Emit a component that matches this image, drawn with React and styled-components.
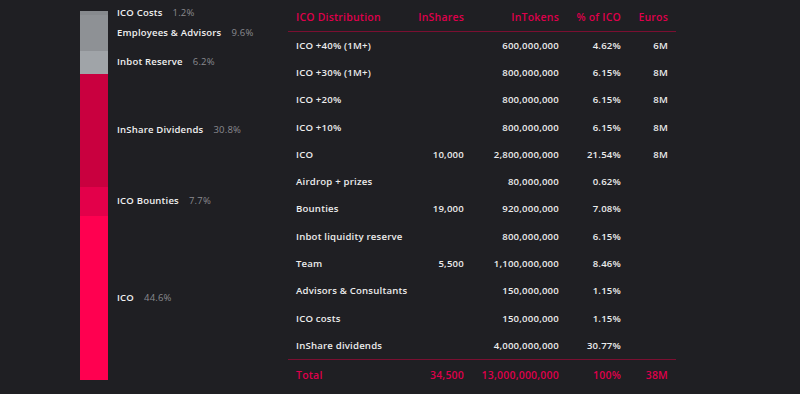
import React from "react";
import styled, { createGlobalStyle } from "styled-components";

//
// --- Data ---
const BAR_HEIGHT = 369;

const segments = [
  { label: "ICO Costs", pct: 1.2, color: "#878a8e" },
  { label: "Employees & Advisors", pct: 9.6, color: "#8e9195" },
  { label: "Inbot Reserve", pct: 6.2, color: "#a0a4a8" },
  { label: "InShare Dividends", pct: 30.8, color: "#c9003f" },
  { label: "ICO Bounties", pct: 7.7, color: "#e3004a" },
  { label: "ICO", pct: 44.6, color: "#ff0050" },
];

const rows = [
  ["ICO +40% (1M+)", "", "600,000,000", "4.62%", "6M"],
  ["ICO +30% (1M+)", "", "800,000,000", "6.15%", "8M"],
  ["ICO +20%", "", "800,000,000", "6.15%", "8M"],
  ["ICO +10%", "", "800,000,000", "6.15%", "8M"],
  ["ICO", "10,000", "2,800,000,000", "21.54%", "8M"],
  ["Airdrop + prizes", "", "80,000,000", "0.62%", ""],
  ["Bounties", "19,000", "920,000,000", "7.08%", ""],
  ["Inbot liquidity reserve", "", "800,000,000", "6.15%", ""],
  ["Team", "5,500", "1,100,000,000", "8.46%", ""],
  ["Advisors & Consultants", "", "150,000,000", "1.15%", ""],
  ["ICO costs", "", "150,000,000", "1.15%", ""],
  ["InShare dividends", "", "4,000,000,000", "30.77%", ""],
];

const headers = ["ICO Distribution", "InShares", "InTokens", "% of ICO", "Euros"];
const totals = ["Total", "34,500", "13,000,000,000", "100%", "38M"];

//
// --- Styled Components ---
const GlobalStyle = createGlobalStyle`
  html, body {
    margin: 0;
    padding: 0;
    background: #1f1f23;
  }
  body {
    font-family: "Open Sans", "Liberation Sans", sans-serif;
  }
`;

const StyledPage = styled.div`
  display: flex;
  align-items: flex-start;
  width: 800px;
  height: 394px;
  padding-left: 80px;
  box-sizing: border-box;
  background: #1f1f23;
  overflow: hidden;
`;

const StyledBarChart = styled.div`
  display: flex;
  flex-direction: column;
  width: 208px;
  height: ${BAR_HEIGHT}px;
  margin-top: 11px;
`;

const StyledSegment = styled.div`
  display: flex;
  align-items: center;
`;

const StyledBarPiece = styled.div`
  align-self: stretch;
  width: 28px;
  flex-shrink: 0;
  background: ${props => props.color};
`;

const StyledLabel = styled.div`
  display: flex;
  gap: 10px;
  margin-left: 9px;
  white-space: nowrap;
  font-size: 9.5px;
  line-height: 12px;
  font-weight: 600;
  color: #f0f0f0;
  letter-spacing: 0.2px;
`;

const StyledPct = styled.span`
  color: #8a8a8f;
  font-weight: 500;
`;

const StyledTable = styled.div`
  display: flex;
  flex-direction: column;
  width: 388px;
  margin-top: 4px;
`;

const StyledRow = styled.div`
  display: grid;
  grid-template-columns: 122px 62px 95px 62px 47px;
  height: ${props => props.h}px;
  align-items: center;
  border-bottom: ${props => (props.line ? "1px solid #7a0f31" : "none")};
  border-top: ${props => (props.topLine ? "1px solid #7a0f31" : "none")};
`;

const StyledCell = styled.div`
  padding: 0 8px 0 ${props => (props.first ? "8px" : "0")};
  text-align: ${props => (props.first ? "left" : "right")};
  white-space: nowrap;
  font-size: ${props => props.size || "9.6px"};
  font-weight: 600;
  letter-spacing: 0.2px;
  color: ${props => (props.accent ? "#de004b" : "#ececec")};
`;

//
// --- Page ---
const App = () => {
  return (
    <>
      <GlobalStyle />
      <StyledPage>
        <StyledBarChart>
          {segments.map(s => (
            <StyledSegment
              key={s.label}
              style={{ height: `${(s.pct / 100) * BAR_HEIGHT}px` }}
            >
              <StyledBarPiece color={s.color} />
              <StyledLabel>
                {s.label}
                <StyledPct>{s.pct}%</StyledPct>
              </StyledLabel>
            </StyledSegment>
          ))}
        </StyledBarChart>
        <StyledTable>
          <StyledRow h={26.5} line>
            {headers.map((h, i) => (
              <StyledCell key={h} first={i === 0} size="10.5px" accent>
                {h}
              </StyledCell>
            ))}
          </StyledRow>
          {rows.map(r => (
            <StyledRow key={r[0]} h={27.3}>
              {r.map((c, i) => (
                <StyledCell key={i} first={i === 0}>
                  {c}
                </StyledCell>
              ))}
            </StyledRow>
          ))}
          <StyledRow h={30} topLine>
            {totals.map((c, i) => (
              <StyledCell key={i} first={i === 0} size="10.5px" accent>
                {c}
              </StyledCell>
            ))}
          </StyledRow>
        </StyledTable>
      </StyledPage>
    </>
  );
};

export default App;
